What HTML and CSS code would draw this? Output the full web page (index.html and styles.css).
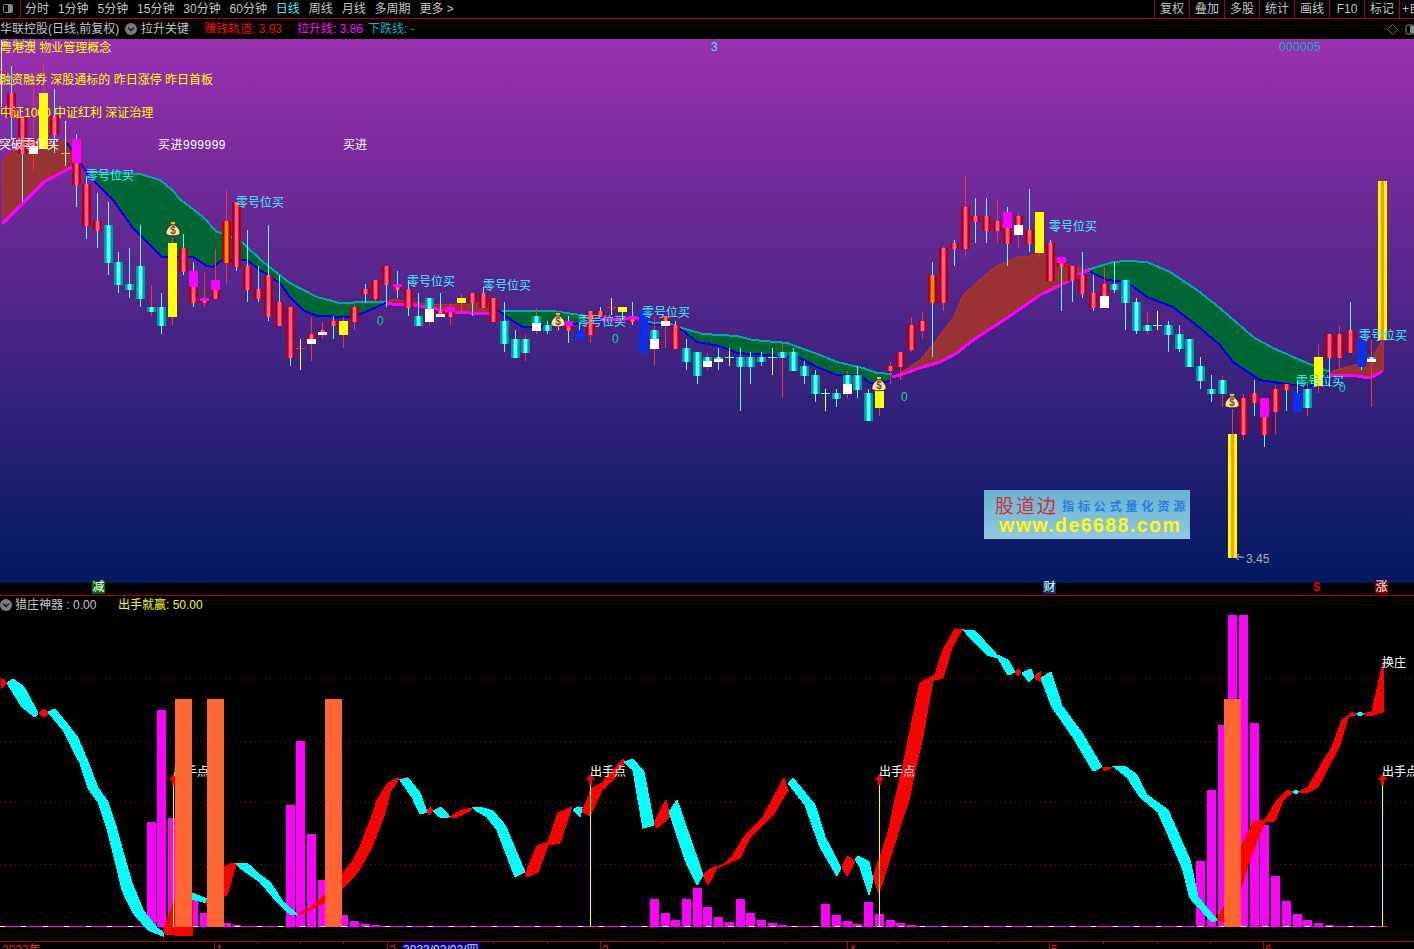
FILE: index.html
```html
<!DOCTYPE html>
<html lang="zh-CN">
<head>
<meta charset="utf-8">
<title>华联控股 日线</title>
<link rel="stylesheet" href="styles.css">
</head>
<body>
<svg class="defs" width="0" height="0" aria-hidden="true">
  <symbol id="bag" viewBox="0 0 16 16">
    <path class="bag-tie" d="M5 .6 L11 .6 L10 4 L6 4 Z"/>
    <path class="bag-body" d="M6 4 C2.5 6.5 .8 9.5 1 12.5 C1.3 15.6 14.7 15.6 15 12.5 C15.2 9.5 13.5 6.5 10 4 Z"/>
    <text class="bag-sign" x="8" y="13">$</text>
  </symbol>
</svg>
<div class="app">
  <header class="toolbar">
    <div class="tb-left">
      <div class="tb-icon">
        <svg width="12" height="11" viewBox="0 0 12 11"><rect class="win-frame" x="1.5" y="1.5" width="9" height="8" rx="1"/><rect class="win-fill" x="6" y="2" width="4" height="7"/></svg>
      </div>
      <nav class="periods">
        <span>分时</span><span>1分钟</span><span>5分钟</span><span>15分钟</span><span>30分钟</span><span>60分钟</span><span class="active">日线</span><span>周线</span><span>月线</span><span>多周期</span><span>更多 &gt;</span>
      </nav>
    </div>
    <div class="tb-right">
      <span class="tb-cell">复权</span><span class="tb-cell">叠加</span><span class="tb-cell">多股</span><span class="tb-cell">统计</span><span class="tb-cell">画线</span><span class="tb-cell">F10</span><span class="tb-cell">标记</span><span class="tb-cell tb-last">+自</span>
    </div>
  </header>
  <div class="infobar">
    <div class="info-left">
      <span class="stock">华联控股(日线,前复权)</span>
      <svg class="chev" width="12" height="12" viewBox="0 0 12 12"><circle class="chev-disc" cx="6" cy="6" r="6"/><path class="chev-mark" d="M3 4.5 L6 7.5 L9 4.5"/></svg>
      <span class="formula">拉升关键</span>
      <span class="v-red">赚钱轨道: 3.93</span>
      <span class="v-mag">拉升线: 3.86</span>
      <span class="v-teal">下跌线: -</span>
    </div>
    <div class="info-right">
      <svg class="info-diamond" width="11" height="11" viewBox="0 0 11 11"><path class="win-line" d="M5.5 .5 L10.5 5.5 L5.5 10.5 L.5 5.5 Z"/></svg>
      <svg class="info-toggle" width="12" height="11" viewBox="0 0 12 11"><rect class="win-frame" x="1" y="1" width="14" height="9" rx="2"/><rect class="win-fill" x="5" y="2" width="6" height="7"/></svg>
    </div>
  </div>
  <main class="price-pane">
    <svg id="price" width="1414" height="544" viewBox="0 39 1414 544"></svg>
    <div class="mark">
      <div class="logo-cn"><span class="logo-red">股道边</span><span class="logo-blue">指标公式量化资源</span></div>
      <div class="logo-url">www.de6688.com</div>
    </div>
  </main>
  <div class="strip">
    <span class="tag tag-jian">减</span>
    <span class="tag tag-cai">财</span>
    <span class="tag tag-s">$</span>
    <span class="tag tag-zhang">涨</span>
  </div>
  <section class="ind-pane">
    <svg id="ind" width="1414" height="345" viewBox="0 596 1414 345"></svg>
    <div class="ind-title">
      <svg class="chev" width="12" height="12" viewBox="0 0 12 12"><circle class="chev-disc" cx="6" cy="6" r="6"/><path class="chev-mark" d="M3 4.5 L6 7.5 L9 4.5"/></svg>
      <span class="ind-name">猎庄神器 : 0.00</span>
      <span class="ind-val">出手就赢: 50.00</span>
    </div>
  </section>
  <footer class="axis">
    <svg id="axis" width="1414" height="8" viewBox="0 941 1414 8"></svg>
  </footer>
</div>
<script src="chart.js"></script>
</body>
</html>
```
FILE: styles.css
```css
* { box-sizing: border-box; }
html, body { margin: 0; padding: 0; background: #000; }
body {
  width: 1414px; height: 949px; overflow: hidden;
  font: 12px/18px "Liberation Sans", "Noto Sans CJK SC", sans-serif;
  color: #c4c4c4;
}
svg { display: block; }
.defs { position: absolute; }
.app { display: flex; flex-direction: column; height: 949px; }

.toolbar {
  display: flex; justify-content: space-between; height: 19px; flex: none;
  border-bottom: 1px solid #b00000;
}
.tb-left { display: flex; }
.tb-icon { width: 21px; padding: 3px 0 0 2px; border-right: 1px solid #b00000; }
.periods { display: flex; gap: 8.9px; padding-left: 4px; white-space: nowrap; }
.periods .active { color: #3cf0ff; }
.tb-right { display: flex; }
.tb-cell { width: 35px; text-align: center; border-left: 1px solid #b00000; }
.tb-last { width: 15px; overflow: hidden; white-space: nowrap; text-align: left; padding-left: 2px; }
.win-frame { fill: none; stroke: #8a8a8a; }
.win-fill { fill: #8a8a8a; }
.win-line { fill: none; stroke: #707070; }

.infobar {
  display: flex; justify-content: space-between; align-items: center;
  height: 20px; flex: none;
}
.info-left { display: flex; align-items: center; white-space: nowrap; }
.chev { flex: none; }
.chev-disc { fill: #7c7c7c; }
.chev-mark { fill: none; stroke: #222; stroke-width: 1.6; }
.stock { width: 125px; }
.formula { margin-left: 4px; width: 63px; }
.v-red { color: #f01010; width: 93px; }
.v-mag { color: #ff10ff; width: 71px; }
.v-teal { color: #00b8c0; }
.info-right { display: flex; align-items: center; gap: 7px; width: 27px; overflow: hidden; }
.info-diamond, .info-toggle { flex: none; }

.price-pane {
  position: relative; height: 544px; flex: none;
  background: linear-gradient(180deg, #9b30ae 0%, #001a62 100%);
}
.mark {
  position: absolute; left: 984px; top: 451px; width: 206px; height: 49px;
  background: linear-gradient(180deg, #68b2d0, #92c8de);
  padding: 6px 0 0 11px;
}
.logo-cn { display: flex; align-items: center; height: 22px; }
.logo-red {
  color: #d23040; font: 400 19px/22px "Liberation Serif", "Noto Sans CJK SC", serif;
  letter-spacing: 2px; width: 67px; white-space: nowrap;
}
.logo-blue { color: #2480e0; font-weight: 700; font-size: 12px; letter-spacing: 3.9px; white-space: nowrap; }
.logo-url {
  color: #fafa20; font: 700 19.6px/18px "Liberation Sans", sans-serif;
  letter-spacing: 1.4px; margin: -2px 0 0 4px; white-space: nowrap;
}

.strip { position: relative; height: 13px; flex: none; border-bottom: 1px solid #b00000; }
.tag { position: absolute; top: -2px; width: 13px; height: 13px; color: #fff; text-align: center; line-height: 13px; }
.tag-jian { left: 92px; background: #006a00; }
.tag-cai { left: 1043px; background: #003c78; }
.tag-s { left: 1310px; color: #f00000; font-weight: 700; }
.tag-zhang { left: 1375px; background: #800000; }

.ind-pane { position: relative; height: 345px; flex: none; }
.ind-title { position: absolute; left: 0; top: 0; display: flex; align-items: center; height: 17px; white-space: nowrap; }
.ind-name { margin-left: 3px; width: 103px; }
.ind-val { color: #f8f800; }

.axis { flex: 1; overflow: hidden; }

/* Price chart */
.c-wr { fill: #ff3030; } .c-wc { fill: #55ffff; } .c-ww { fill: #fff; } .c-wy { fill: #ffc020; }
.c-r0 { fill: #a80018; } .c-r1 { fill: #e4163c; } .c-r2 { fill: #ff6080; }
.c-o0 { fill: #b00010; } .c-o1 { fill: #e03010; } .c-o2 { fill: #ff8800; }
.c-c0 { fill: #009c9c; } .c-c1 { fill: #00d8d8; } .c-c2 { fill: #66ffff; }
.c-y { fill: #ffff00; } .c-g { fill: #ff9900; }
.c-m { fill: #ff00ff; } .c-w { fill: #fff; } .c-b { fill: #0a30f0; }
.area-up { fill: #993333; stroke: #c82828; stroke-width: 1; }
.area-dn { fill: #006633; }
.l-teal { fill: none; stroke: #00a8a8; stroke-width: 2; }
.l-blue { fill: none; stroke: #0000ee; stroke-width: 2; }
.l-mag { fill: none; stroke: #ff00ff; stroke-width: 3; }
.crisp { shape-rendering: crispEdges; }
#price text, #ind text, #axis text { font: 12px "Liberation Sans", "Noto Sans CJK SC", sans-serif; }
.t-zero { fill: #38f4ff; }
.t-yel { fill: #ffff00; }
.t-wht { fill: #fff; }
.t-wide { letter-spacing: .5px; }
.t-num { fill: #00b8c8; letter-spacing: .35px; }
.t-mute { fill: #b0b0b0; }
.t-zero0 { fill: #00d8a8; }
.bag-tie { fill: #e8c050; stroke: #302010; stroke-width: .7; }
.bag-body { fill: #f8e8a0; stroke: #302010; stroke-width: .8; }
.bag-sign { fill: #8a4030; font: 700 10px "Liberation Sans", sans-serif; text-anchor: middle; }
.pin-line { stroke: #c8c8c8; fill: none; }

/* Indicator chart */
.grid { stroke: #c00000; stroke-width: 1; stroke-dasharray: 1 4; }
.rib-r { fill: #ff0000; stroke: #ff0000; stroke-width: 1.2; }
.rib-c { fill: #00ffff; stroke: #00ffff; stroke-width: 1.2; }
.bar-m { fill: #ff00ff; } .bar-o { fill: #ff6633; }
.base { stroke: #ff00ff; stroke-width: 1; }
.base-d { stroke: #fff; stroke-width: 1; stroke-dasharray: 5 16.4; }
.sig { stroke: #ffff00; stroke-width: 1; }
.arrow { fill: #ff0000; }

/* Axis */
.ax-line { fill: #b00000; }
.t-ax { fill: #e82020; }
.ax-date { fill: #000080; }
.t-date { fill: #d8d8ff; }
```
FILE: chart.js
```js
var NS = 'http://www.w3.org/2000/svg';
function el(p, tag, attrs, txt) {
  var e = document.createElementNS(NS, tag);
  for (var k in attrs) e.setAttribute(k, attrs[k]);
  if (txt !== undefined) e.textContent = txt;
  p.appendChild(e);
  return e;
}
function left(i) { return Math.floor(1.6 + 10.71 * i - 4.5); }
function rect(p, cls, x, y, w, h) { el(p, 'rect', { 'class': cls + ' crisp', x: x, y: y, width: w, height: h }); }
function pts(a) { return a.map(function (q) { return q.join(','); }).join(' '); }
function poly(p, cls, a) { el(p, 'polygon', { 'class': cls, points: pts(a) }); }
function line(p, cls, a) { el(p, 'polyline', { 'class': cls, points: pts(a) }); }
function txt(p, cls, x, y, s) { el(p, 'text', { 'class': cls, x: x, y: y }, s); }

/* ---------- price pane ---------- */
var price = document.getElementById('price');

var upTop1 = [[2,161],[13,151],[33,147],[60,141],[75,142]];
var upBot1 = [[2,224],[23,203],[44,182],[66,170],[75,166]];
var dnT1 = [[88,172],[140,174],[160,180],[172,190],[181,200],[203,217],[217,232],[222,233],[243,243],[263,262],[290,283],[317,297],[340,303],[367,302],[387,302]];
var dnB1 = [[67,143],[90,177],[113,200],[133,228],[162,257],[167,257],[193,257],[207,266],[213,267],[222,260],[247,260],[260,270],[280,283],[290,297],[303,310],[317,316],[350,317],[363,313],[377,307],[387,302]];
var upTop2 = [[387,302],[393,299],[433,305],[470,304],[477,303],[490,303]];
var mag2 = [[387,303],[392,304],[414,305],[433,308],[450,312],[470,313],[490,313]];
var dnT2 = [[502,311],[553,311],[580,315],[600,319]];
var dnB2 = [[490,308],[498,310],[508,318],[523,327],[533,327],[547,325],[563,325],[580,323],[600,319]];
var mag3 = [[600,319],[613,320],[637,318],[644,320]];
var dnT3 = [[646,322],[670,324],[682,328],[703,334],[737,336],[753,340],[787,343],[820,355],[837,362],[863,368],[877,373],[892,374]];
var dnB3 = [[646,324],[670,326],[682,330],[697,342],[720,346],[737,353],[770,355],[800,358],[817,367],[837,375],[860,375],[870,383],[887,382],[892,378]];
var upTop3 = [[892,378],[900,373],[920,360],[940,335],[953,318],[963,295],[983,277],[995,267],[1017,257],[1030,256],[1040,253],[1055,258],[1068,265],[1087,270]];
var mag4 = [[892,377],[900,375],[920,368],[940,362],[957,353],[973,340],[1007,318],[1040,295],[1067,282],[1083,272],[1090,270]];
var dnT4 = [[1087,270],[1113,262],[1127,261],[1147,262],[1170,272],[1197,290],[1220,308],[1253,337],[1273,348],[1307,363],[1330,372]];
var dnB4 = [[1087,270],[1107,280],[1127,282],[1147,297],[1173,307],[1200,328],[1220,345],[1233,362],[1260,380],[1273,382],[1307,387],[1320,382],[1330,372]];
var upTop4 = [[1330,372],[1353,365],[1370,363],[1383,338],[1383,371]];
var mag5 = [[1330,375],[1357,376],[1370,378],[1383,371]];

function area(cls, t, b) { poly(price, cls, t.concat(b.slice().reverse())); }
area('area-up crisp', upTop1, upBot1);
area('area-dn crisp', dnT1, dnB1);
area('area-up crisp', upTop2, mag2);
area('area-dn crisp', dnT2, dnB2);
area('area-dn crisp', dnT3, dnB3);
area('area-up crisp', upTop3, mag4);
area('area-dn crisp', dnT4, dnB4);
area('area-up crisp', upTop4, mag5);

[dnT1, dnT2, dnT3, dnT4].forEach(function (a) { line(price, 'l-teal crisp', a); });
[dnB1, dnB2, dnB3, dnB4].forEach(function (a) { line(price, 'l-blue crisp', a); });
[upBot1, mag2, mag3, mag4, mag5].forEach(function (a) { line(price, 'l-mag crisp', a); });

/* index, wick colour, high, low, then body segments: type, top, bottom */
var candles = [
[0,'w',40,107,'tr',71,72],[1,'c',66,140,'r',93,117],[2,'c',116,202,'r',116,154],[3,'r',85,171,'r',140,146,'w',146,154],
[4,'r',63,149,'y',93,149],[5,'c',89,153,'r',116,135],[6,'w',121,166,'ty',153,154],[7,'c',134,207,'m',139,163,'r',163,185],
[8,'c',177,239,'r',184,226],[9,'c',193,248,'r',221,231],[10,'c',202,275,'c',225,263],[11,'c',252,293,'c',262,285],
[12,'c',248,298,'c',284,290],[13,'c',225,307,'c',266,299],[14,'r',285,316,'c',307,312],[15,'c',293,334,'c',307,326],
[16,'r',237,325,'y',243,317],[17,'c',234,275,'r',248,272],[18,'c',262,307,'m',271,287,'r',287,303],[19,'r',272,307,'m',298,301,'r',301,303],
[20,'r',249,299,'m',280,290,'r',290,299],[21,'r',190,284,'o',221,263],[22,'c',202,271,'r',202,267],[23,'c',230,302,'r',266,290],
[24,'c',266,302,'r',289,299],[25,'c',225,321,'r',275,317],[26,'c',275,326,'r',302,326],[27,'c',307,366,'r',307,358],
[28,'w',339,370,'tr',348,349],[29,'r',317,361,'r',334,339,'w',339,344],[30,'r',322,339,'r',330,332,'w',332,335],[31,'c',316,339,'r',321,326],
[32,'r',317,348,'y',321,335],[33,'r',303,330,'r',307,322],[34,'c',284,303,'r',289,294],[35,'r',280,302,'r',280,299],
[36,'c',266,307,'r',266,285],[37,'c',271,298,'m',284,287,'r',287,290],[38,'c',280,316,'r',289,308],[39,'c',293,326,'c',316,326],
[40,'r',298,325,'c',298,309,'w',309,322],[41,'c',293,317,'r',311,314,'w',314,317],[42,'r',303,325,'m',307,312,'r',312,317],[43,'r',294,311,'y',298,303],
[44,'c',293,316,'r',293,303],[45,'c',287,308,'r',293,308],[46,'r',298,322,'r',298,322],[47,'c',302,352,'c',321,344],
[48,'c',330,358,'c',339,358],[49,'r',335,361,'c',339,353],[50,'r',308,334,'c',316,323,'w',323,331],[51,'c',321,334,'c',325,331],
[52,'w',315,330],[53,'c',316,343,'m',321,326,'r',326,331],[54,'c',323,340,'b',330,340],[55,'r',311,343,'r',311,335],
[56,'c',307,317,'r',311,317],[57,'w',298,315,'tr',307,308],[58,'c',312,320,'y',307,312],[59,'c',302,325,'m',316,319,'r',319,322],
[60,'c',311,353,'b',311,353],[61,'r',317,366,'c',330,339,'w',339,349],[62,'r',316,348,'r',316,321,'w',321,326],[63,'c',321,349,'r',325,349],
[64,'c',339,370,'c',348,362],[65,'c',352,384,'c',352,376],[66,'r',353,370,'c',357,361,'w',361,367],[67,'c',348,370,'c',357,359,'w',359,362],
[68,'w',348,366,'tc',357,358],[69,'c',348,411,'c',357,367],[70,'c',352,384,'c',357,367],[71,'c',352,366,'c',357,362],
[72,'w',348,375,'tc',357,358],[73,'r',344,398,'c',352,358],[74,'c',348,371,'c',352,371],[75,'c',361,384,'c',366,376],
[76,'c',370,402,'c',375,394],[77,'w',389,411,'tc',393,394],[78,'c',389,407,'c',393,399],[79,'r',371,398,'c',375,384,'w',384,394],
[80,'c',366,398,'c',375,390],[81,'c',389,421,'c',393,421],[82,'r',380,416,'y',391,408],[83,'r',362,384,'r',366,371],
[84,'r',352,380,'r',352,367],[85,'r',317,352,'r',325,350],[86,'r',312,339,'r',321,331],[87,'c',262,357,'o',275,303],
[88,'r',246,311,'r',248,303],[89,'c',240,266,'r',243,249],[90,'r',176,257,'r',207,249],[91,'c',198,243,'r',216,222],
[92,'c',198,243,'r',216,231],[93,'r',199,243,'r',221,231],[94,'c',207,266,'m',212,228,'r',228,244],[95,'r',213,248,'r',216,225,'w',225,235],
[96,'c',189,252,'r',230,244],[97,'r',212,257,'y',212,253],[98,'c',240,281,'r',243,281],[99,'c',257,311,'m',257,263,'r',263,267],
[100,'c',266,302,'r',266,281],[101,'c',252,298,'r',275,294],[102,'c',275,311,'r',293,308],[103,'r',267,308,'r',284,296,'w',296,308],
[104,'c',262,293,'c',284,290],[105,'c',280,330,'c',280,303],[106,'c',298,334,'c',302,331],[107,'r',312,334,'c',325,331],
[108,'w',311,330,'tc',325,326],[109,'c',321,352,'c',325,335],[110,'c',325,352,'c',334,349],[111,'c',339,367,'c',339,367],
[112,'c',357,389,'c',366,381],[113,'c',375,402,'c',389,394],[114,'r',376,407,'c',380,394],[115,'r',409,558,'g',434,558],
[116,'r',394,440,'r',398,435],[117,'c',380,416,'r',393,403],[118,'c',398,447,'m',398,417,'r',417,435],[119,'r',385,434,'r',389,412],
[120,'c',384,411,'r',384,390],[121,'c',380,412,'b',393,412],[122,'r',381,416,'c',389,408],[123,'r',344,393,'y',357,386],
[124,'c',334,387,'r',334,358],[125,'r',326,370,'r',334,358],[126,'c',302,353,'r',330,353],[127,'c',339,370,'b',339,367],
[128,'r',340,407,'c',357,359,'w',359,362],[129,'y',181,340,'g',181,340]
];
var wc = { r: 'c-wr', c: 'c-wc', w: 'c-ww', y: 'c-y' };
candles.forEach(function (c) {
  var x = left(c[0]);
  rect(price, wc[c[1]], x + 4, c[2], 1, c[3] - c[2]);
  for (var s = 4; s < c.length; s += 3) {
    var t = c[s], y = c[s + 1], h = c[s + 2] - y;
    if (t === 'r' || t === 'o' || t === 'c') {
      var k = 'c-' + t;
      rect(price, k + '0', x, y, 9, h);
      rect(price, k + '1', x + 2, y, 5, h);
      rect(price, k + '2', x + 3, y, 3, h);
    } else if (t === 'g') {
      rect(price, 'c-y', x, y, 9, h);
      rect(price, 'c-g', x + 3, y, 3, h);
    } else if (t === 'tr' || t === 'tc' || t === 'ty') {
      rect(price, t === 'tr' ? 'c-wr' : t === 'tc' ? 'c-wc' : 'c-wy', x, y, 9, 1);
    } else {
      rect(price, 'c-' + t, x, y, 9, h);
    }
  }
});

[[173,229],[558,320],[879,384],[1232,401]].forEach(function (b) {
  el(price, 'use', { href: '#bag', x: b[0] - 8, y: b[1] - 8, width: 16, height: 16 });
});

txt(price, 't-mute', 2, 47, '6.4.50');
txt(price, 't-yel', 0, 52, '粤港澳 物业管理概念');
txt(price, 't-yel', -1, 84, '融资融券 深股通标的 昨日涨停 昨日首板');
txt(price, 't-yel', 0, 117, '中证1000 中证红利 深证治理');
txt(price, 't-wht', -1, 149, '突破零位买');
txt(price, 't-wht t-wide', 158, 149, '买进999999');
txt(price, 't-wht', 343, 149, '买进');
txt(price, 't-zero', 711, 51, '3');
txt(price, 't-num', 1279, 51, '000005');
[[86,180],[236,207],[407,286],[483,290],[578,326],[642,317],[1049,231],[1296,386],[1359,340]].forEach(function (z) {
  txt(price, 't-zero', z[0], z[1], '零号位买');
});
[[377,325],[612,343],[901,401],[1339,392]].forEach(function (z) { txt(price, 't-zero0', z[0], z[1], '0'); });
line(price, 'pin-line', [[1239,554],[1235,557],[1239,560]]);
line(price, 'pin-line', [[1235,557],[1244,557]]);
txt(price, 't-mute', 1246, 563, '3.45');

/* ---------- indicator pane ---------- */
var ind = document.getElementById('ind');
[678, 741, 802, 864].forEach(function (y) {
  el(ind, 'line', { 'class': 'grid crisp', x1: 0, x2: 1414, y1: y + .5, y2: y + .5 });
});
var bars = [[14,822],[15,710],[16,818],[18,899],[19,913],[21,923],[22,925],[27,805],[28,741],[29,834],[30,880],[32,915],[33,921],[34,924],[35,925],
[61,899],[62,913],[63,920],[64,899],[65,888],[66,907],[67,917],[68,922],[69,899],[70,913],[71,920],[72,923],[73,925],
[77,904],[78,915],[79,921],[80,924],[81,902],[82,914],[83,920],[84,923],[85,925],
[112,861],[113,790],[114,725],[115,615],[116,615],[117,723],[118,825],[119,876],[120,901],[121,914],[122,920],[123,923],[124,925]];
bars.forEach(function (b) { rect(ind, 'bar-m', left(b[0]), b[1], 9, 927 - b[1]); });
el(ind, 'line', { 'class': 'base crisp', x1: 0, x2: 1387, y1: 926.5, y2: 926.5 });
el(ind, 'line', { 'class': 'base-d crisp', x1: 0, x2: 1387, y1: 926.5, y2: 926.5 });

var R = 'rib-r crisp', C = 'rib-c crisp';
[
[R,[[2,679],[2,688],[7,683]]],
[C,[[7,683],[13,679],[24,687],[38,713],[35,717],[22,707]]],
[R,[[39,713],[44,709],[49,713],[44,717]]],
[C,[[48,712],[55,709],[68,725],[78,738],[90,767],[98,788],[108,802],[115,823],[123,852],[132,883],[143,910],[157,928],[163,932],[163,936],[148,930],[133,913],[122,890],[115,860],[107,828],[98,802],[88,788],[80,763],[68,740],[63,730]]],
[R,[[163,932],[174,902],[192,893],[192,935],[176,935],[165,934]]],
[C,[[192,893],[207,899],[207,903],[192,899]]],
[R,[[207,900],[224,867],[230,864],[236,864],[227,895],[207,905]]],
[C,[[236,864],[248,864],[260,875],[270,882],[283,902],[297,914],[290,914],[277,902],[260,882],[243,870]]],
[R,[[298,914],[310,908],[325,895],[342,875],[352,862],[360,847],[373,813],[377,800],[388,783],[399,778],[397,782],[390,792],[385,813],[372,847],[358,872],[343,888],[320,905],[300,915]]],
[C,[[400,780],[408,778],[420,793],[427,812],[420,814],[412,797]]],
[R,[[427,811],[430,807],[433,811],[429,815]]],
[C,[[433,811],[441,807],[450,817],[440,817]]],
[R,[[450,817],[462,810],[473,808],[470,811],[457,817]]],
[C,[[473,808],[483,808],[493,811],[505,825],[525,872],[515,877],[497,830],[487,817],[475,810]]],
[R,[[525,875],[537,846],[548,842],[558,813],[572,807],[560,843],[548,845],[538,872],[527,877]]],
[C,[[573,810],[578,807],[582,808],[580,817]]],
[R,[[582,812],[592,788],[602,783],[623,759],[625,762],[613,780],[602,790],[590,816]]],
[C,[[624,762],[633,759],[644,772],[654,825],[643,828],[633,770]]],
[R,[[654,823],[666,800],[670,817],[657,828]]],
[C,[[669,812],[677,800],[703,875],[697,885],[685,860]]],
[R,[[703,875],[712,868],[723,865],[732,857],[743,838],[763,817],[784,778],[788,790],[773,815],[750,838],[740,858],[717,868],[708,885]]],
[C,[[788,783],[793,778],[815,805],[825,837],[841,868],[837,876],[820,847],[805,805]]],
[R,[[842,867],[847,856],[855,861],[847,876]]],
[C,[[855,859],[858,856],[869,862],[873,880],[869,895],[860,867]]],
[R,[[873,877],[879,860],[888,833],[895,800],[902,770],[908,741],[920,683],[935,675],[943,650],[955,629],[962,630],[952,647],[943,678],[933,680],[922,741],[915,770],[909,800],[898,833],[879,893]]],
[C,[[963,630],[975,631],[997,655],[1008,660],[1015,672],[1008,675],[998,658],[987,655]]],
[R,[[1015,672],[1018,669],[1021,673],[1018,676]]],
[C,[[1022,673],[1031,669],[1034,677],[1029,682]]],
[R,[[1034,677],[1040,672],[1041,682]]],
[C,[[1041,678],[1051,672],[1062,706],[1082,733],[1102,767],[1093,771],[1073,737],[1052,707]]],
[R,[[1102,768],[1113,767],[1105,771]]],
[C,[[1114,767],[1126,767],[1137,775],[1147,795],[1168,810],[1190,860],[1198,897],[1217,920],[1212,922],[1190,898],[1182,867],[1158,812],[1140,797],[1127,777]]],
[R,[[1217,920],[1224,907],[1241,848],[1253,822],[1265,820],[1277,800],[1287,790],[1293,792],[1283,800],[1275,821],[1265,822],[1257,840],[1248,865],[1241,888],[1224,922]]],
[C,[[1293,792],[1296,790],[1299,792],[1296,794]]],
[R,[[1299,792],[1308,787],[1332,747],[1342,720],[1352,713],[1358,714],[1348,717],[1340,745],[1318,787],[1307,793]]],
[C,[[1357,714],[1360,712],[1363,714],[1360,716]]],
[R,[[1363,714],[1372,712],[1383,663],[1383,712],[1370,716]]]
].forEach(function (p) { poly(ind, p[0], p[1]); });

[[173,771],[590,771],[879,771],[1382,771]].forEach(function (s) {
  var x = s[0];
  el(ind, 'line', { 'class': 'sig crisp', x1: x + .5, x2: x + .5, y1: 783, y2: 927 });
  poly(ind, 'arrow', [[x + .5, 774], [x + 5.5, 780], [x + 2, 780], [x + 2, 785], [x - 1, 785], [x - 1, 780], [x - 4.5, 780]]);
  txt(ind, 't-wht', s[0], 776, '出手点');
});
txt(ind, 't-wht', 1382, 667, '换庄');
[175, 207, 325, 1224].forEach(function (x) { rect(ind, 'bar-o', x, 699, 17, 228); });

/* ---------- time axis ---------- */
var axis = document.getElementById('axis');
rect(axis, 'ax-line', 0, 941, 1414, 1);
[257,300,343,493,547,662,723,785,897,948,998,1103,1157,1210].forEach(function (x) { rect(axis, 'ax-line', x, 942, 1, 2); });
[214,387,600,847,1049,1263].forEach(function (x) { rect(axis, 'ax-line', x, 942, 1, 7); });
txt(axis, 't-ax', 2, 954, '2023年');
[[216,'1'],[389,'2'],[602,'3'],[849,'4'],[1051,'5'],[1265,'6']].forEach(function (l) { txt(axis, 't-ax', l[0], 954, l[1]); });
rect(axis, 'ax-date', 402, 942, 78, 7);
txt(axis, 't-date', 403, 954, '2023/02/02/四');
```
